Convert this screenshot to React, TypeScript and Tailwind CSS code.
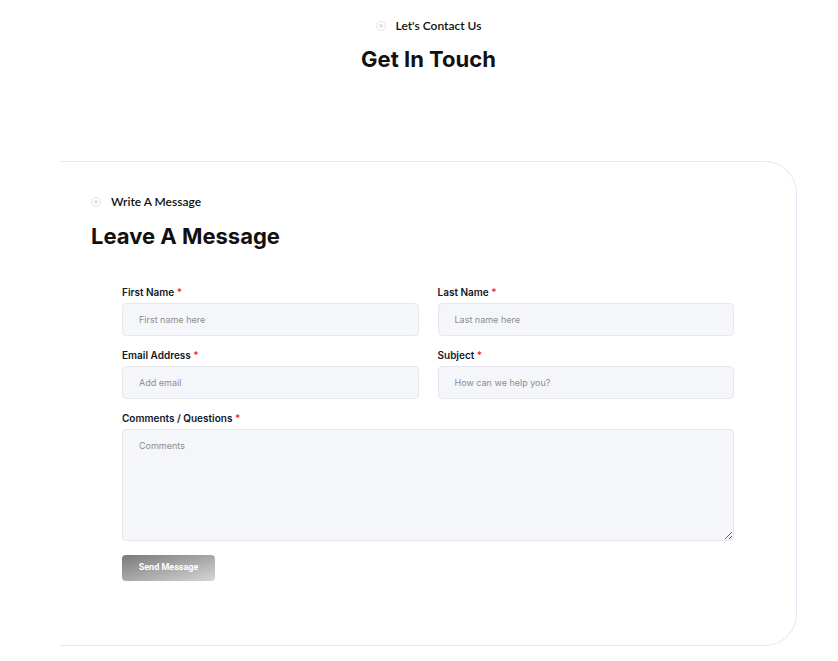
import React from "react";

const Dot = () => (
  <span className="inline-flex h-[10px] w-[10px] items-center justify-center rounded-full border border-[#e2e2e2]">
    <span className="h-[4px] w-[4px] rounded-full bg-[#e2e2e2]" />
  </span>
);

const Label = ({ text }: { text: string }) => (
  <label className="mb-[3px] block text-[10px] font-semibold text-[#111827]" style={{ fontFamily: "Inter, sans-serif" }}>
    {text} <span className="text-[#ff1f1f]">*</span>
  </label>
);

const inputCls =
  "h-[33px] w-full rounded-[4px] border border-[#e6e8ee] bg-[#f5f6fa] px-[16px] text-[9px] text-[#333] placeholder:text-[#8d8d8d] outline-none";

export default function App() {
  return (
    <div className="min-h-[661px] bg-white" style={{ fontFamily: "Inter, sans-serif" }}>
      {/* Header */}
      <div className="flex flex-col items-center pl-[19px] pt-[17px]">
        <div className="flex items-center gap-[10px]">
          <Dot />
          <span className="text-[12px] font-semibold text-[#111]" style={{ fontFamily: "Lato, sans-serif" }}>
            Let's Contact Us
          </span>
        </div>
        <h1 className="mt-[10px] text-[22px] font-bold leading-[28px] text-[#111]">Get In Touch</h1>
      </div>

      {/* Card */}
      <div className="ml-[60px] mt-[88px] w-[737px] rounded-r-[32px] border-y border-r border-[#e8e6f4] pb-[64px] pt-[31px]">
        <div className="pl-[31px]">
          <div className="flex items-center gap-[10px]">
            <Dot />
            <span className="text-[12px] font-semibold text-[#111]" style={{ fontFamily: "Lato, sans-serif" }}>
              Write A Message
            </span>
          </div>
          <h2 className="mt-[11px] text-[22px] font-bold leading-[28px] text-[#111]">Leave A Message</h2>
        </div>

        <form className="ml-[62px] mt-[35px] w-[612px]" onSubmit={(e) => e.preventDefault()}>
          <div className="grid grid-cols-2 gap-x-[19px] gap-y-[12px]">
            <div>
              <Label text="First Name" />
              <input className={inputCls} placeholder="First name here" />
            </div>
            <div>
              <Label text="Last Name" />
              <input className={inputCls} placeholder="Last name here" />
            </div>
            <div>
              <Label text="Email Address" />
              <input className={inputCls} placeholder="Add email" />
            </div>
            <div>
              <Label text="Subject" />
              <input className={inputCls} placeholder="How can we help you?" />
            </div>
            <div className="col-span-2">
              <Label text="Comments / Questions" />
              <textarea
                className="block h-[112px] w-full rounded-[4px] border border-[#e6e8ee] bg-[#f5f6fa] px-[16px] py-[9px] text-[9px] text-[#333] outline-none placeholder:text-[#8d8d8d]"
                placeholder="Comments"
              />
            </div>
          </div>
          <button
            type="submit"
            className="mt-[14px] h-[26px] w-[93px] rounded-[4px] bg-gradient-to-br from-[#7a7a7a] to-[#d6d6d6] text-[9px] font-bold text-white"
            style={{ fontFamily: "Roboto, sans-serif" }}
          >
            Send Message
          </button>
        </form>
      </div>
    </div>
  );
}
